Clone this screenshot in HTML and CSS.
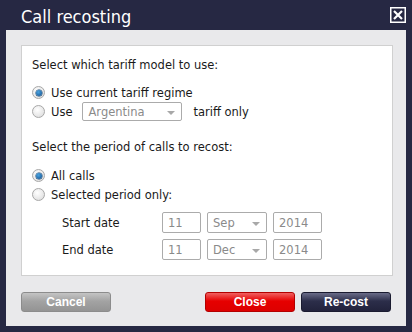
FILE: index.html
```html
<!DOCTYPE html>
<html lang="en">
<head>
<meta charset="UTF-8">
<title>Call recosting</title>
<link rel="stylesheet" href="styles.css">
</head>
<body>
<div class="dialog">
    <div class="dialog-header">
        <span class="dialog-title">Call recosting</span>
        <button class="dialog-close" aria-label="Close">
            <svg width="16" height="16" viewBox="0 0 16 16"><rect x="0.75" y="0.75" width="14.5" height="14.5" fill="none" stroke="#fff" stroke-width="1.5"/><path d="M4 4 L12 12 M12 4 L4 12" stroke="#fff" stroke-width="2.2"/></svg>
        </button>
    </div>
    <div class="dialog-body">
        <div class="form-box">
            <p class="label">Select which tariff model to use:</p>
            <label class="radio-row"><span class="radio checked"></span><span>Use current tariff regime</span></label>
            <label class="radio-row"><span class="radio"></span><span>Use</span><span class="select select-country">Argentina<span class="caret"></span></span><span>tariff only</span></label>

            <p class="label second">Select the period of calls to recost:</p>
            <label class="radio-row"><span class="radio checked"></span><span>All calls</span></label>
            <label class="radio-row"><span class="radio"></span><span>Selected period only:</span></label>

            <div class="date-row">
                <span class="date-label">Start date</span>
                <span class="field field-day">11</span>
                <span class="select select-month">Sep<span class="caret"></span></span>
                <span class="field field-year">2014</span>
            </div>
            <div class="date-row">
                <span class="date-label">End date</span>
                <span class="field field-day">11</span>
                <span class="select select-month">Dec<span class="caret"></span></span>
                <span class="field field-year">2014</span>
            </div>
        </div>
        <div class="dialog-buttons">
            <button class="btn btn-grey">Cancel</button>
            <div class="spacer"></div>
            <button class="btn btn-red">Close</button>
            <button class="btn btn-navy">Re-cost</button>
        </div>
    </div>
</div>
</body>
</html>
```

FILE: styles.css
```css
body {
    margin: 0;
    background-color: #262843;
    font-family: "DejaVu Sans", sans-serif;
    color: #1a1a1a;
}
.dialog {
    width: 412px;
    height: 332px;
    box-sizing: border-box;
    padding: 0 6px 6px 6px;
    display: flex;
    flex-direction: column;
}
.dialog-header {
    height: 30px;
    display: flex;
    align-items: center;
    justify-content: space-between;
    padding-left: 15px;
}
.dialog-title {
    color: #ffffff;
    font-family: "DejaVu Sans Condensed", "DejaVu Sans", sans-serif;
    font-size: 18px;
    margin-top: 2px;
}
.dialog-close {
    background: none;
    border: none;
    padding: 0;
    width: 16px;
    height: 16px;
    margin-top: -1px;
    cursor: pointer;
}
.dialog-close svg {
    display: block;
}
.dialog-body {
    flex: 1;
    background-color: #e9e9eb;
    padding: 15px 13px 0 15px;
    display: flex;
    flex-direction: column;
}
.form-box {
    height: 231px;
    box-sizing: border-box;
    background-color: #ffffff;
    border: 1px solid #d0d0d0;
    padding: 10px 10px 0 10px;
    font-size: 11.5px;
}
.label {
    margin: 2px 0 11px 0;
    line-height: 14px;
}
.label.second {
    margin-top: 19px;
    margin-bottom: 12px;
}
.radio-row {
    display: flex;
    align-items: center;
    height: 19px;
}
.radio {
    flex: none;
    width: 11px;
    height: 11px;
    border-radius: 50%;
    border: 1px solid #a8a8a8;
    background: radial-gradient(circle at 40% 35%, #ffffff 0%, #e4e4e4 70%, #cfcfcf 100%);
    margin-right: 6px;
    position: relative;
}
.radio.checked::after {
    content: "";
    position: absolute;
    left: 2.5px;
    top: 2.5px;
    width: 6px;
    height: 6px;
    border-radius: 50%;
    background: radial-gradient(circle at 40% 35%, #4aa3e0 0%, #1a5e9c 80%);
    box-shadow: 0 0 0 0.5px #0d3d6a;
}
.select, .field {
    flex: none;
    box-sizing: border-box;
    height: 19px;
    border: 1px solid #ababab;
    border-radius: 2px;
    color: #8a8a8a;
    display: inline-flex;
    align-items: center;
    padding-left: 5px;
    position: relative;
    background-color: #ffffff;
}
.select-country {
    width: 100px;
    margin: 0 11px 0 10px;
}
.caret {
    position: absolute;
    right: 6px;
    top: 8px;
    border-left: 4px solid transparent;
    border-right: 4px solid transparent;
    border-top: 4px solid #a8a8a8;
}
.date-row {
    display: flex;
    align-items: center;
    margin-top: 8px;
    height: 21px;
}
.date-row + .date-row {
    margin-top: 6px;
}
.date-label {
    width: 100px;
    padding-left: 30px;
}
.field, .date-row .select {
    height: 21px;
}
.field-day {
    width: 39px;
    margin-right: 6px;
}
.select-month {
    width: 60px;
    margin-right: 6px;
}
.select-month .caret {
    top: 9px;
}
.field-year {
    width: 49px;
}
.dialog-buttons {
    display: flex;
    margin-top: 16px;
    padding-right: 2px;
}
.spacer {
    flex: 1;
}
.btn {
    width: 90px;
    height: 20px;
    border-radius: 3px;
    color: #ffffff;
    font-family: "Liberation Sans", Arial, sans-serif;
    font-weight: bold;
    font-size: 12px;
    padding: 0;
    cursor: pointer;
}
.btn-grey {
    border: 1px solid #8c8c8c;
    background: linear-gradient(#c4c4c4 0%, #a3a3a3 45%, #949494 100%);
}
.btn-red {
    border: 1px solid #b30000;
    background: linear-gradient(#f06060 0%, #e60000 45%, #dd0000 100%);
    margin-right: 6px;
}
.btn-navy {
    border: 1px solid #1a1b30;
    background: linear-gradient(#6a6c88 0%, #2c2e4a 45%, #22233c 100%);
}
```
